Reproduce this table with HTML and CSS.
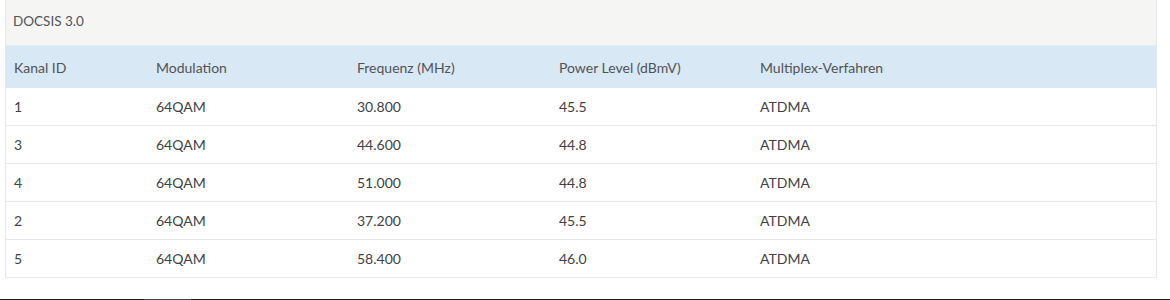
FILE: index.html
```html
<!DOCTYPE html>
<html lang="de">
<head>
<meta charset="utf-8">
<title>DOCSIS 3.0</title>
<link rel="stylesheet" href="styles.css">
</head>
<body>
<div class="page">
  <section class="panel">
    <div class="panel-heading">DOCSIS 3.0</div>
    <table class="channels">
      <thead>
        <tr>
          <th class="c1">Kanal ID</th>
          <th class="c2">Modulation</th>
          <th class="c3">Frequenz (MHz)</th>
          <th class="c4">Power Level (dBmV)</th>
          <th class="c5">Multiplex-Verfahren</th>
        </tr>
      </thead>
      <tbody>
        <tr><td>1</td><td>64QAM</td><td>30.800</td><td>45.5</td><td>ATDMA</td></tr>
        <tr><td>3</td><td>64QAM</td><td>44.600</td><td>44.8</td><td>ATDMA</td></tr>
        <tr><td>4</td><td>64QAM</td><td>51.000</td><td>44.8</td><td>ATDMA</td></tr>
        <tr><td>2</td><td>64QAM</td><td>37.200</td><td>45.5</td><td>ATDMA</td></tr>
        <tr><td>5</td><td>64QAM</td><td>58.400</td><td>46.0</td><td>ATDMA</td></tr>
      </tbody>
    </table>
  </section>
  <div class="footer-bar"><span class="footer-mark"></span></div>
</div>
</body>
</html>
```
FILE: styles.css
```css
html, body {
  margin: 0;
  padding: 0;
  background: #ffffff;
}
body {
  font-family: "Lato", "Open Sans", "Liberation Sans", sans-serif;
  font-size: 14px;
  color: #444;
  width: 1170px;
  height: 300px;
  overflow: hidden;
}
.page {
  display: flex;
  flex-direction: column;
  height: 300px;
}
.panel {
  margin: 0 13px 0 5px;
  border: 1px solid #e8e8e8;
  border-top: none;
  background: #fff;
}
.panel-heading {
  background: #f5f5f4;
  height: 45px;
  border-bottom: 1px solid #ebebeb;
  box-sizing: content-box;
  padding: 0 7px;
  line-height: 42px;
  color: #505356;
  font-size: 13.5px;
}
.channels {
  width: 100%;
  border-collapse: collapse;
  table-layout: fixed;
}
.channels th {
  background: #d9e8f5;
  font-weight: normal;
  text-align: left;
  color: #505356;
  height: 42px;
  padding: 0 8px;
  font-size: 14px;
}
.channels td {
  height: 37px;
  padding: 0 8px;
  border-top: 1px solid #e8e8e8;
  color: #3f4245;
}
.channels tbody tr:first-child td {
  border-top: none;
  height: 37px;
}
.channels .c1 { width: 126px; }
.channels .c2 { width: 185px; }
.channels .c3 { width: 186px; }
.channels .c4 { width: 185px; }
.footer-bar {
  margin-top: auto;
  height: 1px;
  background: #1f2326;
  position: relative;
}
.footer-mark {
  position: absolute;
  left: 144px;
  width: 47px;
  top: 0;
  height: 1px;
  background: #45494c;
}
```
